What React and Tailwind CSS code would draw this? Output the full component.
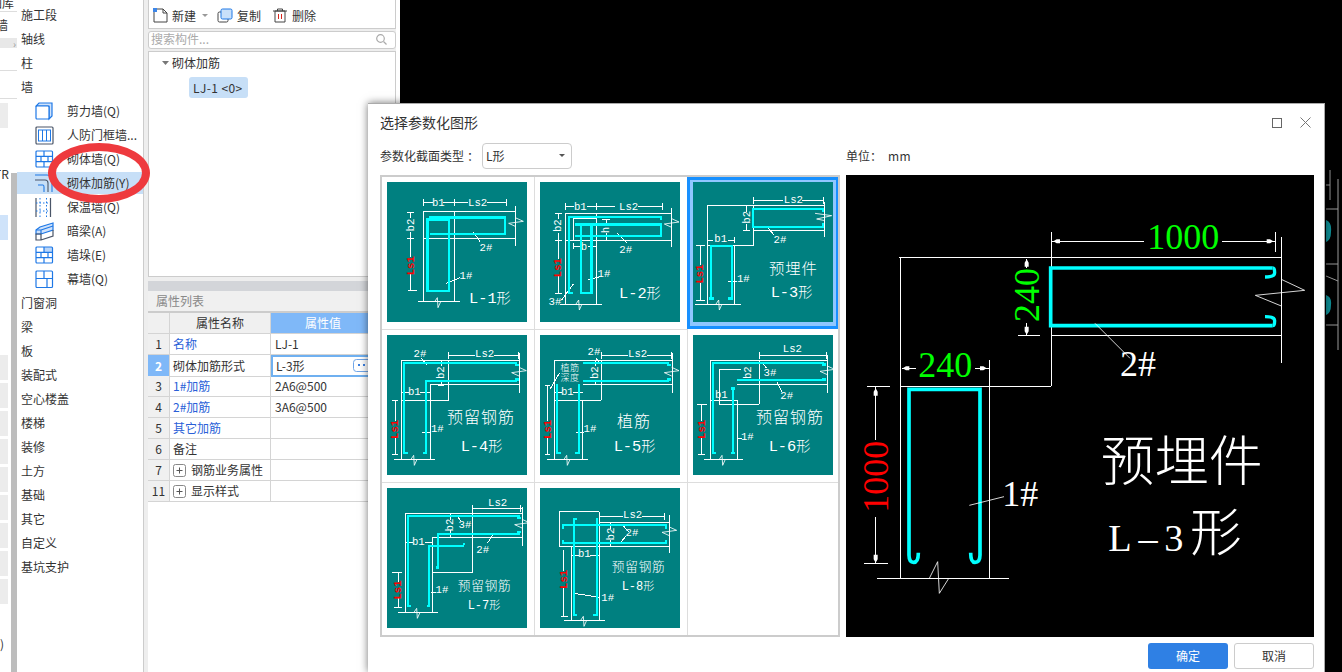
import React from "react";

const CJK = "'Noto Sans CJK SC', sans-serif";
const MONO = "'Liberation Mono', monospace";
const SERIF = "'Liberation Serif', 'Noto Sans CJK SC', serif";

const D = ({ x, y, c = "#fff", r, s = 32, children }) => (
  <text x={x} y={y} fill={c} fontSize={s} textAnchor="middle" fontFamily={MONO}
    fontWeight={c === "#ff0000" ? "bold" : undefined}
    dominantBaseline={r ? "central" : undefined}
    transform={r ? `rotate(-90 ${x} ${y})` : undefined}>{children}</text>
);
const C = ({ x, y, s = 48, children }) => (
  <text x={x} y={y} fill="#fff" fontSize={s} textAnchor="middle" fontFamily={CJK} fontWeight="300" letterSpacing={s * 0.06}>{children}</text>
);
const Lb = ({ x, y, t, s = 46 }) => (
  <text x={x} y={y} fill="#fff" fontSize={s} fontFamily={MONO}>{t}<tspan fontFamily={CJK} fontSize={s * 0.92} fontWeight="300">形</tspan></text>
);
const W = ({ d }) => <path d={d} fill="none" stroke="#fff" strokeWidth="3" shapeRendering="crispEdges" />;
const Cy = ({ d, w = 7 }) => <path d={d} fill="none" stroke="#00ffff" strokeWidth={w} shapeRendering="crispEdges" />;
const Zb = ({ x, y }) => <path d={`M${x - 10} ${y}L${x - 2} ${y - 12}L${x} ${y + 18}L${x + 8} ${y}`} fill="none" stroke="#fff" strokeWidth="2.5" />;
const Zr = ({ x, y }) => <path d={`M${x} ${y - 14}L${x + 22} ${y - 4}L${x - 22} ${y + 2}L${x} ${y + 12}`} fill="none" stroke="#fff" strokeWidth="2.5" />;

const Thumb = ({ vb, children }) => (
  <div className="w-[140px] h-[140px] bg-[#008080]">
    <svg width="140" height="140" viewBox={`${vb} 420 420`} className="block">{children}</svg>
  </div>
);

const thumbs = [
  <Thumb vb="51 246" key="1">
    <W d="M160 308H190M220 308H295M352 308H410M160 298V318M254 298V318M410 298V318M160 333H437M160 333V605M254 333V605M160 416H437M437 318V437M145 605H270M122 338V355M122 395V470M122 522V572M112 338H132M112 416H132M115 572H140" />
    <D x={205} y={318}>b1</D><D x={323} y={318}>Ls2</D>
    <D x={122} y={375} r>b2</D><D x={122} y={497} r c="#ff0000">Ls1</D>
    <W d="M310 395L330 425M228 550L270 533" />
    <D x={348} y={452}>2#</D><D x={288} y={537}>1#</D>
    <Cy d="M178 352H405V401H180M237 358V572H172V358H237" />
    <Zb x={204} y={605} /><Zr x={438} y={368} />
    <Lb x={297} y={610} t="L-1" />
  </Thumb>,
  <Thumb vb="510 246" key="2">
    <W d="M586 320H612M650 320H735M805 320H878M586 310V330M680 310V330M878 310V330M586 340H905M586 340V612M680 340V612M586 420H905M905 325V440M610 355H680M610 355V420M708 358V375M708 400V420M695 358H720M570 612H695M565 340V358M565 400V478M565 527V580M555 340H575M555 420H575M555 580H575M610 438H632M655 438H680M610 428V448M742 400L772 430M655 540L690 530M575 600L610 552" />
    <D x={631} y={330}>b1</D><D x={776} y={330}>Ls2</D>
    <D x={708} y={390} r>h</D><D x={642} y={449}>b</D>
    <D x={565} y={377} r>b2</D><D x={565} y={503} r c="#ff0000">Ls1</D>
    <D x={767} y={460}>2#</D><D x={702} y={532}>1#</D><D x={555} y={616}>3#</D>
    <Cy d="M873 360V350H597V578H608M615 373H873V408H615M632 368V578H664V368" />
    <Zb x={628} y={612} /><Zr x={905} y={370} />
    <Lb x={747} y={595} t="L-2" />
  </Thumb>,
  <Thumb vb="969 246" key="3">
    <W d="M1150 300H1240M1297 300H1360M1150 290V312M1360 290V312M1013 316H1365M1013 316V612M1150 316V437M1013 437H1150M1150 392H1365M1364 305V410M1094 437V612M975 612H1112M1013 420H1030M1075 420H1094M1094 410V430M1130 316V335M1130 372V392M1120 392H1140M978 437H1005M990 437V495M990 548V600M978 600H1005M1190 378L1212 405M1075 545H1100" />
    <D x={1270} y={308}>Ls2</D><D x={1052} y={426}>b1</D>
    <D x={1130} y={352} r>b2</D><D x={990} y={522} r c="#ff0000">Ls1</D>
    <D x={1230} y={428}>2#</D><D x={1120} y={547}>1#</D>
    <Cy d="M1358 336V326H1149V380H1358V370M1022 598V437H1086V598" />
    <Cy d="M1018 595H1031M1075 595H1088" w={8} />
    <path d="M1335 340L1385 347L1340 357L1365 362" fill="none" stroke="#fff" strokeWidth="2.5" />
    <Zb x={1048} y={612} />
    <C x={1270} y={522} s={46}>预埋件</C>
    <Lb x={1202} y={592} t="L-3" />
  </Thumb>,
  <Thumb vb="51 15" key="4">
    <W d="M236 76H316M372 76H445M236 66V88M445 66V88M95 91H450M95 91V388M236 91V210M95 210H236M180 163H450M180 163V388M448 70V188M213 91V108M213 150V165M203 165H223M95 187H118M150 187H180M65 211H85M75 211V272M75 325V373M65 373H85M72 388H195M155 85L170 105M156 306H182" />
    <D x={150} y={82}>2#</D><D x={344} y={82}>Ls2</D><D x={133} y={196}>b1</D><D x={202} y={307}>1#</D>
    <D x={213} y={128} r>b2</D><D x={75} y={298} r c="#ff0000">Ls1</D>
    <Cy d="M103 372V99H442M168 372V152H442" w={6} />
    <Cy d="M100 369H114M158 369H172M434 105H446M434 149H446" w={8} />
    <Zb x={133} y={388} /><Zr x={447} y={126} />
    <C x={333} y={280} s={48}>预留钢筋</C>
    <Lb x={272} y={362} t="L-4" />
  </Thumb>,
  <Thumb vb="510 15" key="5">
    <W d="M694 76H775M832 76H905M694 66V88M905 66V88M553 91H908M553 91V388M694 91V210M553 210H694M638 163H908M638 210V388M908 70V188M678 85L695 105M676 91V108M676 150V165M553 187H577M608 187H638M540 178L568 130M525 165H540M533 165V272M533 325V373M525 373H540M532 388H653M618 306H642" />
    <D x={672} y={76}>2#</D><D x={803} y={82}>Ls2</D><D x={592} y={196}>b1</D><D x={660} y={307}>1#</D>
    <D x={676} y={128} r>b2</D><D x={533} y={298} r c="#ff0000">Ls1</D>
    <C x={600} y={124} s={27}>植筋</C><C x={600} y={154} s={27}>深度</C>
    <Cy d="M640 99H898M640 152H898M562 163V372M628 163V372" w={6} />
    <Cy d="M560 369H574M616 369H630M892 105H904M892 149H904" w={8} />
    <Zb x={592} y={388} /><Zr x={905} y={126} />
    <C x={792} y={290} s={48}>植筋</C>
    <Lb x={731} y={362} t="L-5" />
  </Thumb>,
  <Thumb vb="969 15" key="6">
    <W d="M1168 76H1368M1168 65V88M1368 65V88M1021 91H1372M1021 91V388M1168 91V222M1048 118H1112M1048 118V222M1048 222H1168M1102 163H1372M1102 210V388M1372 75V188M1021 210H1102M1178 100L1190 115M1220 155L1235 185M980 223H1010M995 223V272M995 325V373M985 373H1005M1002 388H1118M1102 325H1115" />
    <D x={1267} y={65}>Ls2</D><D x={1200} y={137}>3#</D><D x={1250} y={208}>2#</D><D x={1054} y={204}>b1</D><D x={1132} y={331}>1#</D>
    <D x={1133} y={128} r>b2</D><D x={995} y={298} r c="#ff0000">Ls1</D>
    <Cy d="M1362 99H1029V372M1362 150H1103M1090 172V372" w={6} />
    <Cy d="M1026 369H1038M1083 369H1096M1356 104H1368M1356 149H1368M1084 176H1096M1102 150H1114" w={8} />
    <Zb x={1058} y={388} /><Zr x={1372} y={122} />
    <C x={1260} y={280} s={48}>预留钢筋</C>
    <Lb x={1196} y={362} t="L-6" />
  </Thumb>,
  <Thumb vb="51 474" key="7">
    <W d="M308 536H455M308 525V547M452 525V547M106 550H458M106 550V847M458 530V648M188 622H458M188 622V847M308 536V727M188 727H308M240 550V570M240 600V622M262 558L272 572M370 612L352 640M106 636H130M165 636H188M65 727H95M85 727V755M85 805V832M72 832H95M84 847H204M184 787H198" />
    <D x={383} y={527}>Ls2</D><D x={285} y={595}>3#</D><D x={338} y={668}>2#</D><D x={145} y={645}>b1</D><D x={216} y={790}>1#</D>
    <D x={240} y={585} r>b2</D><D x={85} y={780} r c="#ff0000">Ls1</D>
    <Cy d="M115 830V558H450M203 714V611H450M176 830V648H283" w={6} />
    <Cy d="M112 828H122M170 828H180M197 712H207M278 642H284M442 564H452M442 606H452" w={8} />
    <Zb x={142} y={847} /><Zr x={456} y={582} />
    <C x={344} y={780} s={38}>预留钢筋</C>
    <Lb x={293} y={836} t="L-7" s={36} />
  </Thumb>,
  <Thumb vb="510 474" key="8">
    <W d="M688 558H760M815 558H884M884 548V570M568 545H688M568 545V650M688 545V650M568 650H898M688 577H898M898 555V670M605 650V872M688 650V872M721 577V597M721 630V650M760 587L775 605M750 640L768 618M605 676H628M660 676H688M580 660V722M580 775V858M572 858H595M582 871H705M612 790L690 802" />
    <D x={788} y={565}>Ls2</D><D x={786} y={618}>2#</D><D x={643} y={680}>b1</D><D x={713} y={814}>1#</D>
    <D x={723} y={612} r>b2</D><D x={582} y={748} r c="#ff0000">Ls1</D>
    <Cy d="M580 596V585H888V596M580 630V638H888V630M622 567H612V856H622M680 565V856H670" w={6} />
    <Zb x={642} y={871} /><Zr x={898} y={605} />
    <C x={806} y={722} s={38}>预留钢筋</C>
    <Lb x={755} y={780} t="L-8" s={36} />
  </Thumb>,
];

const Big = () => {
  const hArrow = (x, dir) => `M${x - 10 * dir} 424L${x} 418H${x + 10 * dir}V430H${x}Z`;
  return (
    <svg width="468" height="462" viewBox="18 225 1404 1386" className="block">
      <W d="M634 395V455M1306 395V455M634 424H912M1146 424H1306M178 472H1324M181 472V1435M634 455V858M181 858H634M448 780V1435M1324 410V788M534 706H600M634 706H1324M82 858H150M107 858V1020M107 1250V1390M72 1390H144M110 1435H507M560 478V505M560 670V704M185 805H228M405 805H448" />
      <path d={hArrow(650, 1)} fill="#fff" />
      <path d={hArrow(1290, -1)} fill="#fff" />
      <path d="M188 805L198 799H208V811H198Z M440 805L430 799H420V811H430Z M560 478L566 488V500H554V488Z M560 704L566 694V680H554V694Z M107 865L113 875V887H101V875Z M107 1388L113 1378V1364H101V1378Z" fill="#fff" />
      <text x="1030" y="447" fill="#00ff00" fontSize="108" textAnchor="middle" fontFamily={SERIF}>1000</text>
      <text x="316" y="832" fill="#00ff00" fontSize="108" textAnchor="middle" fontFamily={SERIF}>240</text>
      <text x="560" y="585" fill="#00ff00" fontSize="108" textAnchor="middle" dominantBaseline="central" transform="rotate(-90 560 585)" fontFamily={SERIF}>240</text>
      <text x="107" y="1130" fill="#ff0000" fontSize="108" textAnchor="middle" dominantBaseline="central" transform="rotate(-90 107 1130)" fontFamily={SERIF}>1000</text>
      <path d="M1298 504H632V677H1298" fill="none" stroke="#00ffff" strokeWidth="11" />
      <path d="M1298 504Q1304 504 1304 518Q1304 531 1275 531M1298 677Q1304 677 1304 662Q1304 650 1275 650" fill="none" stroke="#00ffff" strokeWidth="10" />
      <path d="M207 1365V868H420V1365Q420 1387 405 1387Q392 1387 392 1358M207 1365Q207 1387 221 1387Q235 1387 235 1358" fill="none" stroke="#00ffff" strokeWidth="11" />
      <path d="M1324 538L1394 571L1246 586L1324 618M765 670L870 775M268 1435L293 1385L298 1480L325 1437M388 1216L492 1190" fill="none" stroke="#fff" strokeWidth="2.5" />
      <text x="840" y="828" fill="#fff" fontSize="108" fontFamily={SERIF}>2#</text>
      <text x="487" y="1218" fill="#fff" fontSize="108" fontFamily={SERIF}>1#</text>
      <text x="1025" y="1142" fill="#fff" fontSize="162" textAnchor="middle" fontFamily={CJK} fontWeight="300">预埋件</text>
      <text x="805" y="1352" fill="#fff" fontSize="115" letterSpacing="20" fontFamily={SERIF}>L–3<tspan fontSize="155" fontFamily={CJK} fontWeight="300">形</tspan></text>
    </svg>
  );
};

const B = "#1e78e6";
const G = "#4a5568";
const icons = {
  shear: <g fill="none" stroke={B} strokeWidth="1.2"><path d="M4 1H17V14L14 17V4H1Z" fill="#cfe2fb" /><rect x="1" y="4" width="13" height="13" rx="1" fill="#fff" /></g>,
  door: <g fill="none"><rect x="1" y="1" width="17" height="17" rx="1" stroke={G} strokeWidth="1.2" /><rect x="3.5" y="4" width="12" height="11" stroke={B} /><path d="M7.5 4V15M11.5 4V15" stroke={B} /></g>,
  brick: <g fill="none" stroke={B} strokeWidth="1.2"><rect x="1" y="1" width="16.5" height="16" rx="1" /><path d="M1 6.3H17.5M1 11.6H17.5M9 1V6.3M6 6.3V11.6M13 6.3V11.6M9 11.6V17" /></g>,
  rebar: <g fill="none"><path d="M0 1H12Q17 1 17 7V18" stroke={B} strokeWidth="1.1" /><path d="M0 6H10Q13 6 13 9V18" stroke={G} strokeWidth="1.1" /><path d="M3 11H8Q9 11 9 13V18" stroke={B} strokeWidth="1.1" /></g>,
  insul: <g fill="none"><path d="M1 0V19M15.5 0V19" stroke={G} strokeWidth="1.2" /><path d="M5 0V19M11.5 0V19" stroke={B} strokeDasharray="1.5 2" /><path d="M1 5H15M1 13H15" stroke={B} strokeDasharray="1.5 2" /></g>,
  beam: <g fill="none" strokeWidth="1.2"><path d="M1 8L5 5L18 1V8L6 12L1 12Z" fill="#cfe2fb" stroke={B} /><path d="M1 8H6V12M6 8L18 4" stroke={B} /><path d="M1 12H6V18H1ZM6 18L18 14V8" stroke={G} /></g>,
  pier: <g fill="none" stroke={B} strokeWidth="1.2"><rect x="9" y="1" width="8.5" height="5.3" fill="#b9d5f8" stroke="none" /><rect x="1" y="1" width="16.5" height="16" rx="1" /><path d="M1 6.3H17.5M1 11.6H17.5M9 1V6.3M6 6.3V11.6M13 6.3V11.6M9 11.6V17" /></g>,
  curtain: <g fill="none" stroke={B} strokeWidth="1.2"><rect x="1" y="1" width="16.5" height="16.5" rx="1" /><path d="M1 8.5H17.5M9 1V8.5M12 8.5V17.5" /></g>,
};

const NavRow = ({ children }) => <div className="h-6 pl-1 flex items-center text-[12px] text-[#333] whitespace-nowrap">{children}</div>;
const Sub = ({ icon, children, sel }) => (
  <div className="h-6 py-px">
    <div className={`h-full flex items-center text-[12px] text-[#333] ${sel ? "bg-[#c7dff7]" : ""}`}>
      <svg width="19" height="19" viewBox="0 0 19 19" className="ml-[18px] mr-[13px] shrink-0">{icons[icon]}</svg>
      <span className="whitespace-nowrap">{children}</span>
    </div>
  </div>
);

const Row = ({ n, name, blue, val, sel, plus }) => (
  <div className="grid grid-cols-[22px_101px_125px] h-[21px] text-[12px] text-[#333]">
    <div className={`flex items-center justify-center border-r border-b border-[#d4d4d4] ${sel ? "bg-[#7fb8f8] text-white font-bold" : "bg-[#f0f0f0]"}`}>{n}</div>
    <div className={`flex items-center pl-[3px] border-r border-b border-[#d4d4d4] whitespace-nowrap ${blue ? "text-[#2a5fd8]" : ""}`}>
      {plus && (
        <svg width="13" height="13" viewBox="0 0 13 13" className="mr-[5px] shrink-0">
          <rect x="0.5" y="0.5" width="12" height="12" rx="2" fill="#fff" stroke="#888" />
          <path d="M3.500 6.500H9.500M6.500 3.500V9.500" stroke="#555" />
        </svg>
      )}
      {name}
    </div>
    {sel ? (
      <div className="flex items-center pl-[3px] border-2 border-[#6fb0f0] bg-white relative">
        {val}
        <svg width="22" height="13" viewBox="0 0 22 13" className="absolute left-[80px] top-[2px]">
          <rect x="0.5" y="0.5" width="21" height="12" rx="3" fill="#fff" stroke="#6fa5e8" />
          <path d="M5 5H7V7H5ZM10 5H12V7H10ZM15 5H17V7H15Z" fill="#3b7fe0" />
        </svg>
      </div>
    ) : (
      <div className="flex items-center pl-1 border-b border-[#d4d4d4]">{val}</div>
    )}
  </div>
);

export default function App() {
  return (
    <div className="relative w-[1342px] h-[672px] overflow-hidden flex bg-white font-['Noto_Sans_CJK_SC',sans-serif]">
      {/* clipped left stub */}
      <div className="w-[17px] h-full flex flex-col text-[12px] text-[#333] shrink-0 overflow-hidden bg-white">
        <div className="h-[12px] border-b border-[#ddd] overflow-hidden leading-[6px] whitespace-nowrap -ml-[10px]">图库</div>
        <div className="h-[26px] flex items-center -ml-[4px]">墙</div>
        <div className="h-[10px] bg-[#e8e8e8] flex items-center justify-end pr-px text-[10px] text-[#999]">›</div>
        <div className="h-[23px] border-b border-[#ddd]" />
        <div className="h-[28px] border-b border-[#ddd]" />
        <div className="h-[4px]" />
        <div className="h-[25px] w-2 bg-[#ececec]" />
        <div className="h-[40px]" />
        <div className="flex flex-1">
          <div className="w-[11px] flex flex-col overflow-hidden">
            <div className="h-[11px] leading-[11px] -ml-[6px] whitespace-nowrap">TR</div>
            <div className="h-[36px]" />
            <div className="h-[25px] w-2 bg-[#cfe3fa]" />
            {[0, 1, 2, 3, 4, 5, 6, 7, 8].map((i) => (
              <div key={i} className={`h-[25px] w-2 bg-[#ececec] mb-[3px] ${i === 0 ? "mt-[115px]" : ""}`} />
            ))}
            <div className="mt-[31px] text-[12px] leading-none">)</div>
          </div>
          <div className="w-[6px] mt-[5px] bg-[#bdbdbd]" />
        </div>
      </div>

      {/* category sidebar */}
      <div className="w-[127px] h-full pt-[3px] shrink-0 bg-white border-r border-[#ccc]">
        <NavRow>施工段</NavRow>
        <NavRow>轴线</NavRow>
        <NavRow>柱</NavRow>
        <NavRow>墙</NavRow>
        <Sub icon="shear">剪力墙(Q)</Sub>
        <Sub icon="door">人防门框墙...</Sub>
        <Sub icon="brick">砌体墙(Q)</Sub>
        <Sub icon="rebar" sel>砌体加筋(Y)</Sub>
        <Sub icon="insul">保温墙(Q)</Sub>
        <Sub icon="beam">暗梁(A)</Sub>
        <Sub icon="pier">墙垛(E)</Sub>
        <Sub icon="curtain">幕墙(Q)</Sub>
        {["门窗洞", "梁", "板", "装配式", "空心楼盖", "楼梯", "装修", "土方", "基础", "其它", "自定义", "基坑支护"].map((t) => (
          <NavRow key={t}>{t}</NavRow>
        ))}
      </div>

      {/* component panel */}
      <div className="w-[252px] h-full shrink-0 bg-[#eeeeee] pl-1 flex flex-col">
        <div className="w-[248px] h-[29px] pt-[3px] bg-white border border-t-0 border-[#ccc] flex items-center text-[12px] text-[#333] pl-[4px]">
          <svg width="15" height="15" viewBox="0 0 15 15" className="mr-[4px]"><path d="M1 3V14H14V5L10 1H4" fill="none" stroke="#444" /><path d="M10 1V5H14" fill="none" stroke="#444" /><rect x="0" y="0" width="4" height="4" fill="#3d86e8" /></svg>
          <span>新建</span>
          <svg width="6" height="4" className="ml-[6px] mr-[9px]"><path d="M0 0H6L3 3Z" fill="#999" /></svg>
          <svg width="16" height="15" viewBox="0 0 16 15" className="mr-[4px]"><rect x="1" y="4" width="10" height="10" rx="1.5" fill="#fff" stroke="#444" /><rect x="4" y="1" width="11" height="10" rx="1.5" fill="#c9e0fa" stroke={B} /></svg>
          <span className="mr-[12px]">复制</span>
          <svg width="14" height="15" viewBox="0 0 14 15" className="mr-[5px]"><path d="M2 3H12V14H2ZM0 3H14M4.5 3V1H9.500V3" fill="none" stroke="#444" /><path d="M5.500 6V11M8.500 6V11" stroke="#d9251d" /></svg>
          <span>删除</span>
        </div>
        <div className="w-[248px] h-[18px] mt-[2px] bg-white border border-[#ccc] rounded-[3px] flex items-center justify-between pl-[2px] pr-[8px] text-[12px] text-[#aaa] pb-[2px]">
          <span>搜索构件...</span>
          <svg width="11" height="11" viewBox="0 0 11 11"><circle cx="4.500" cy="4.500" r="3.800" fill="none" stroke="#aaa" strokeWidth="1.200" /><path d="M7.500 7.500L10.500 10.500" stroke="#aaa" strokeWidth="1.200" /></svg>
        </div>
        <div className="w-[248px] h-[226px] mt-[2px] bg-white border border-[#ccc] text-[12px] text-[#333]">
          <div className="h-[22px] flex items-center pl-[13px]">
            <svg width="7" height="4" className="mr-[3px]"><path d="M0 0H7L3.500 4Z" fill="#777" /></svg>
            砌体加筋
          </div>
          <div className="ml-[40px] mt-[3px] w-[59px] h-[21px] rounded-[3px] bg-[#c7dff7] flex items-center pl-[4px] whitespace-nowrap tracking-[0.4px]">LJ-1 &lt;0&gt;</div>
        </div>
        <div className="w-[248px] h-[10px] mt-[4px] bg-[#d3d5d9]" />
        <div className="w-[248px] h-[22px] bg-[#f0f0f0] flex items-center pl-2 text-[12px] text-[#888] border-b-2 border-[#ccc]">属性列表</div>
        <div className="w-[248px] flex-1 bg-white overflow-hidden">
          <div className="grid grid-cols-[22px_101px_125px] h-[21px] text-[12px]">
            <div className="bg-[#f0f0f0] border-r border-b border-[#d4d4d4]" />
            <div className="bg-[#f0f0f0] border-r border-b border-[#d4d4d4] flex items-center justify-center text-[#333]">属性名称</div>
            <div className="bg-[#7fb8f8] text-white flex items-center pl-[34px] border-b border-[#d4d4d4]">属性值</div>
          </div>
          <Row n="1" name="名称" blue val="LJ-1" />
          <Row n="2" name="砌体加筋形式" val="L-3形" sel />
          <Row n="3" name="1#加筋" blue val="2A6@500" />
          <Row n="4" name="2#加筋" blue val="3A6@500" />
          <Row n="5" name="其它加筋" blue />
          <Row n="6" name="备注" />
          <Row n="7" name="钢筋业务属性" plus />
          <Row n="11" name="显示样式" plus />
        </div>
      </div>

      {/* CAD canvas behind dialog */}
      <div className="flex-1 h-full ml-1 bg-black relative">
        <svg width="17" height="200" viewBox="0 0 17 200" className="absolute right-0 top-[150px]">
          <path d="M5 20V50M1 35H5M1 59H13M13 29V200M1 114H13M1 126L13 131M1 175H13" stroke="#999" fill="none" />
          <path d="M1 70Q7 72 6 82Q6 90 1 92ZM1 145Q7 147 6 155Q6 163 1 165Z" fill="#0e8f96" />
        </svg>
      </div>

      {/* red annotation ring */}
      <div className="absolute left-[48px] top-[143px] w-[102px] h-[60px] rounded-[50%] border-[8px] border-[#ee3a3e]" />

      {/* dialog */}
      <div className="absolute left-[368px] top-[103px] w-[957px] h-[569px] bg-white border-t border-r border-[#aaa] shadow-[0_0_8px_rgba(0,0,0,0.55)] flex flex-col pl-3 text-[12px] text-[#333]">
        <div className="h-[37px] flex items-center justify-between pr-[13px]">
          <span className="text-[14px]">选择参数化图形</span>
          <div className="flex items-center gap-[18px]">
            <svg width="10" height="10" viewBox="0 0 10 10"><rect x="0.500" y="0.500" width="9" height="9" fill="none" stroke="#666" /></svg>
            <svg width="11" height="11" viewBox="0 0 11 11"><path d="M0.500 0.500L10.500 10.500M10.500 0.500L0.500 10.500" stroke="#777" /></svg>
          </div>
        </div>
        <div className="h-[34px] pt-[2px] flex items-start">
          <div className="w-[102px] h-[26px] flex items-center whitespace-nowrap">参数化截面类型<span className="ml-[3px]">：</span></div>
          <div className="w-[90px] h-[26px] border border-[#ccc] rounded-[4px] flex items-center justify-between pl-[3px] pr-[6px]">
            <span>L形</span>
            <svg width="6" height="4"><path d="M0 0H6L3 3Z" fill="#555" /></svg>
          </div>
          <div className="ml-[274px] h-[26px] flex items-center">单位：<span className="ml-[6px] tracking-[0.3px]">mm</span></div>
        </div>
        <div className="flex gap-[6px]">
          <div className="w-[460px] h-[462px] border-2 border-[#ccc] overflow-hidden grid grid-cols-[153px_153px_150px] auto-rows-[153px]">
            {thumbs.map((t, i) =>
              i === 2 ? (
                <div key={i} className="-ml-px h-[152px] w-[152px] border-[3px] border-[#1890ff] bg-[#8fc7ff] pl-[3px] pt-[2px]">{t}</div>
              ) : (
                <div key={i} className={`pl-[5px] pt-[5px] border-[#ddd] border-b ${i === 5 ? "" : "border-r"}`}>{t}</div>
              )
            )}
            <div />
          </div>
          <div className="w-[468px] h-[462px] bg-black"><Big /></div>
        </div>
        <div className="flex justify-end gap-[6px] pt-[6px] pr-[10px]">
          <div className="w-[80px] h-[26px] rounded-[3px] bg-[#2f80e4] text-white flex items-center justify-center">确定</div>
          <div className="w-[80px] h-[26px] rounded-[3px] border border-[#ccc] text-[#333] bg-white flex items-center justify-center">取消</div>
        </div>
      </div>
    </div>
  );
}
